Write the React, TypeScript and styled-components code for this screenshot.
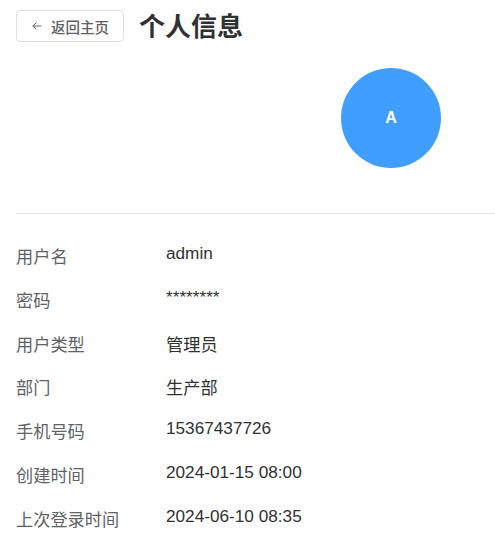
import React from "react";
import styled, { createGlobalStyle } from "styled-components";

const Global = createGlobalStyle`
  html, body { margin: 0; padding: 0; background: #fff; overflow: hidden; }
  body { font-family: "Liberation Sans", "Noto Sans CJK SC", sans-serif; }
`;

const Page = styled.div`
  padding: 10px 0 0 16px;
  width: 750px;
`;

const Header = styled.div`
  display: flex;
  align-items: center;
  gap: 15px;
  height: 32px;
`;

const BackButton = styled.button`
  display: inline-flex;
  align-items: center;
  gap: 8px;
  height: 32px;
  width: 108px;
  padding: 0 0 0 14px;
  border: 1px solid #dcdfe6;
  border-radius: 4px;
  background: #fff;
  color: #606266;
  font-family: "Noto Sans CJK SC", sans-serif;
  font-size: 14.5px;
  font-weight: 500;
  cursor: pointer;
`;

const Title = styled.h1`
  margin: 0;
  font-family: "Noto Sans CJK SC", sans-serif;
  font-size: 26px;
  font-weight: 700;
  color: #303133;
  line-height: 32px;
  position: relative;
  top: -1px;
`;

const AvatarWrap = styled.div`
  display: flex;
  justify-content: center;
  padding: 26px 0 45px;
  border-bottom: 1px solid #e4e7ed;
`;

const Avatar = styled.div`
  width: 100px;
  height: 100px;
  border-radius: 50%;
  background: #409eff;
  color: #fff;
  display: flex;
  align-items: center;
  justify-content: center;
  font-family: "Liberation Sans", sans-serif;
  font-weight: 700;
  font-size: 16px;
`;

const List = styled.div`
  padding-top: 29px;
`;

const Row = styled.div`
  display: flex;
  height: 43.8px;
  align-items: flex-start;
`;

const Label = styled.div`
  width: 150px;
  font-family: "Noto Sans CJK SC", sans-serif;
  font-size: 17.2px;
  color: #606266;
  line-height: normal;
`;

const Value = styled.div`
  font-family: "Liberation Sans", "Noto Sans CJK SC", sans-serif;
  font-size: 17.2px;
  color: #303133;
  line-height: normal;
`;

const rows: [string, string][] = [
  ["用户名", "admin"],
  ["密码", "********"],
  ["用户类型", "管理员"],
  ["部门", "生产部"],
  ["手机号码", "15367437726"],
  ["创建时间", "2024-01-15 08:00"],
  ["上次登录时间", "2024-06-10 08:35"],
];

export default function App() {
  return (
    <>
      <Global />
      <Page>
        <Header>
          <BackButton>
            <svg width="12" height="12" viewBox="0 0 24 24" fill="none" stroke="#606266" strokeWidth="2" strokeLinecap="round" strokeLinejoin="round">
              <path d="M20 12H4" />
              <path d="M10 6l-6 6 6 6" />
            </svg>
            返回主页
          </BackButton>
          <Title>个人信息</Title>
        </Header>
        <AvatarWrap>
          <Avatar>A</Avatar>
        </AvatarWrap>
        <List>
          {rows.map(([k, v]) => (
            <Row key={k}>
              <Label>{k}</Label>
              <Value>{v}</Value>
            </Row>
          ))}
        </List>
      </Page>
    </>
  );
}
